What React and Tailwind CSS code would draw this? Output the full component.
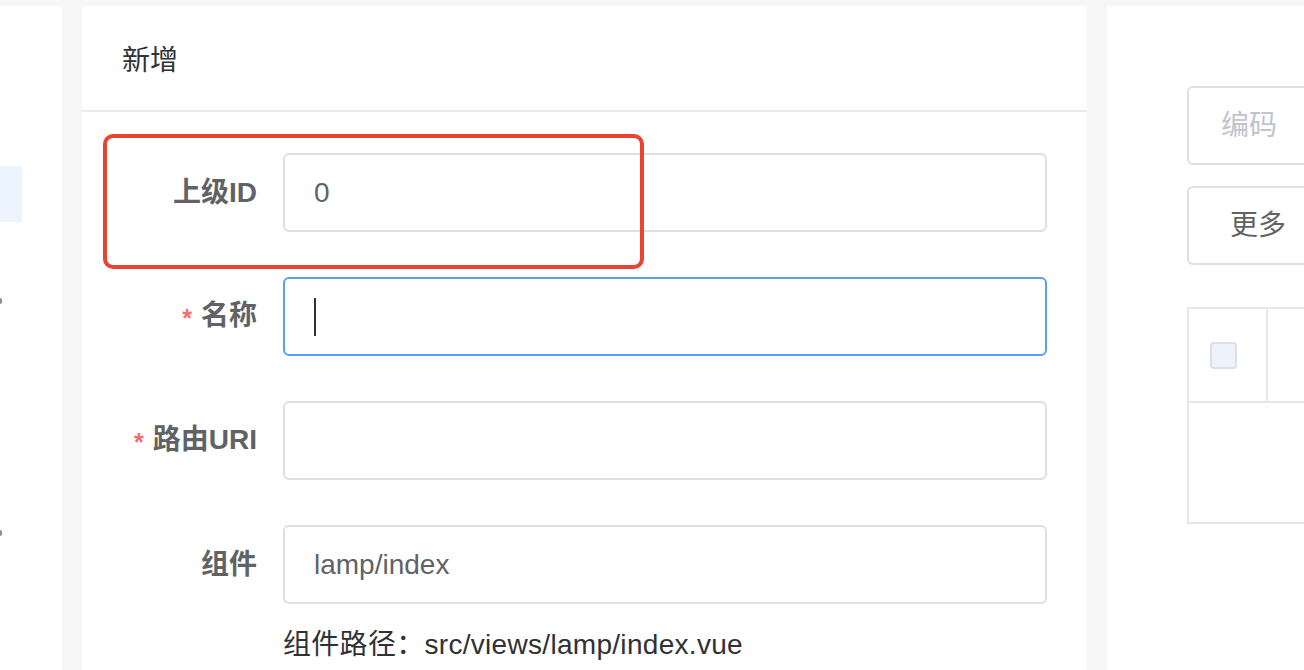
import React from 'react';

const font = "font-['Liberation_Sans','Noto_Sans_CJK_SC',sans-serif]";

const FormRow = ({ label, required, children }) => {
  return (
    <div className="flex items-center mb-[45px]">
      <div className="w-[201px] pr-[26px] text-right text-[28px] font-semibold text-[#606266] leading-none">
        {required && <span className="text-[#f56c6c] text-[25px] mr-[9px] align-middle">*</span>}
        {label}
      </div>
      {children}
    </div>
  );
};

const App = () => {
  return (
    <div className={`w-[1304px] h-[670px] overflow-hidden bg-[#f6f6f6] flex pt-[6px] ${font}`}>
      {/* side menu, cut off */}
      <div className="relative w-[62px] shrink-0 bg-white mr-[20px]">
        <div className="absolute left-0 top-[160px] w-[22px] h-[56px] bg-[#ecf5ff]"></div>
        <div className="absolute left-0 top-[292px] w-[2px] h-[6px] rounded-r bg-[#8c8f96]"></div>
        <div className="absolute left-0 top-[524px] w-[2px] h-[6px] rounded-r bg-[#8c8f96]"></div>
      </div>

      {/* add form */}
      <div className="relative w-[1005px] shrink-0 bg-white">
        <div className="h-[106px] border-b-2 border-[#e8eaf1] flex items-center pl-[40px] pt-[6px]">
          <span className="text-[28px] text-[#303133]">新增</span>
        </div>

        <div className="pt-[41px]">
          <FormRow label="上级ID">
            <div className="w-[764px] h-[79px] border-2 border-[#dcdfe6] rounded-[6px] flex items-center pl-[29px] text-[28px] text-[#606266]">
              0
            </div>
          </FormRow>
          <FormRow label="名称" required>
            <div className="w-[764px] h-[79px] border-2 border-[#5a9ff5] rounded-[6px] flex items-center pl-[29px]">
              <span className="block w-[2px] h-[38px] bg-[#303133]"></span>
            </div>
          </FormRow>
          <FormRow label="路由URI" required>
            <div className="w-[764px] h-[79px] border-2 border-[#dcdfe6] rounded-[6px]"></div>
          </FormRow>
          <div className="flex items-center">
            <div className="w-[201px] pr-[26px] text-right text-[28px] font-semibold text-[#606266] leading-none">组件</div>
            <div className="w-[764px] h-[79px] border-2 border-[#dcdfe6] rounded-[6px] flex items-center pl-[29px] text-[28px] text-[#606266]">
              lamp/index
            </div>
          </div>
          <div className="pl-[201px] mt-[21px] text-[28px] tracking-[0.3px] leading-[40px] text-[#303133]">
            组件路径：src/views/lamp/index.vue
          </div>
        </div>

        {/* highlight mark */}
        <div className="absolute left-[21px] top-[128px] w-[541px] h-[135px] border-4 border-[#ea4331] rounded-[10px]"></div>
      </div>

      {/* list panel, cut off */}
      <div className="flex-1 ml-[20px] bg-white pl-[80px] pt-[80px] overflow-hidden">
        <div className="w-[300px] h-[79px] border-2 border-[#dcdfe6] rounded-[6px] flex items-center pl-[32px] text-[28px] text-[#c0c4cc]">
          编码
        </div>
        <div className="mt-[21px] w-[160px] h-[79px] border-2 border-[#dcdfe6] rounded-[6px] flex items-center pl-[41px] text-[28px] text-[#606266]">
          更多
        </div>
        <div className="mt-[42px] w-[300px] border-2 border-[#e4e7ed]">
          <div className="flex h-[94px] border-b-2 border-[#e4e7ed]">
            <div className="w-[79px] border-r-2 border-[#e4e7ed] flex items-center pl-[21px]">
              <span className="block w-[27px] h-[27px] rounded-[4px] border-2 border-[#dcdfe6] bg-[#edf2fc]"></span>
            </div>
            <div className="flex-1"></div>
          </div>
          <div className="h-[119px]"></div>
        </div>
      </div>
    </div>
  );
};

export default App;
